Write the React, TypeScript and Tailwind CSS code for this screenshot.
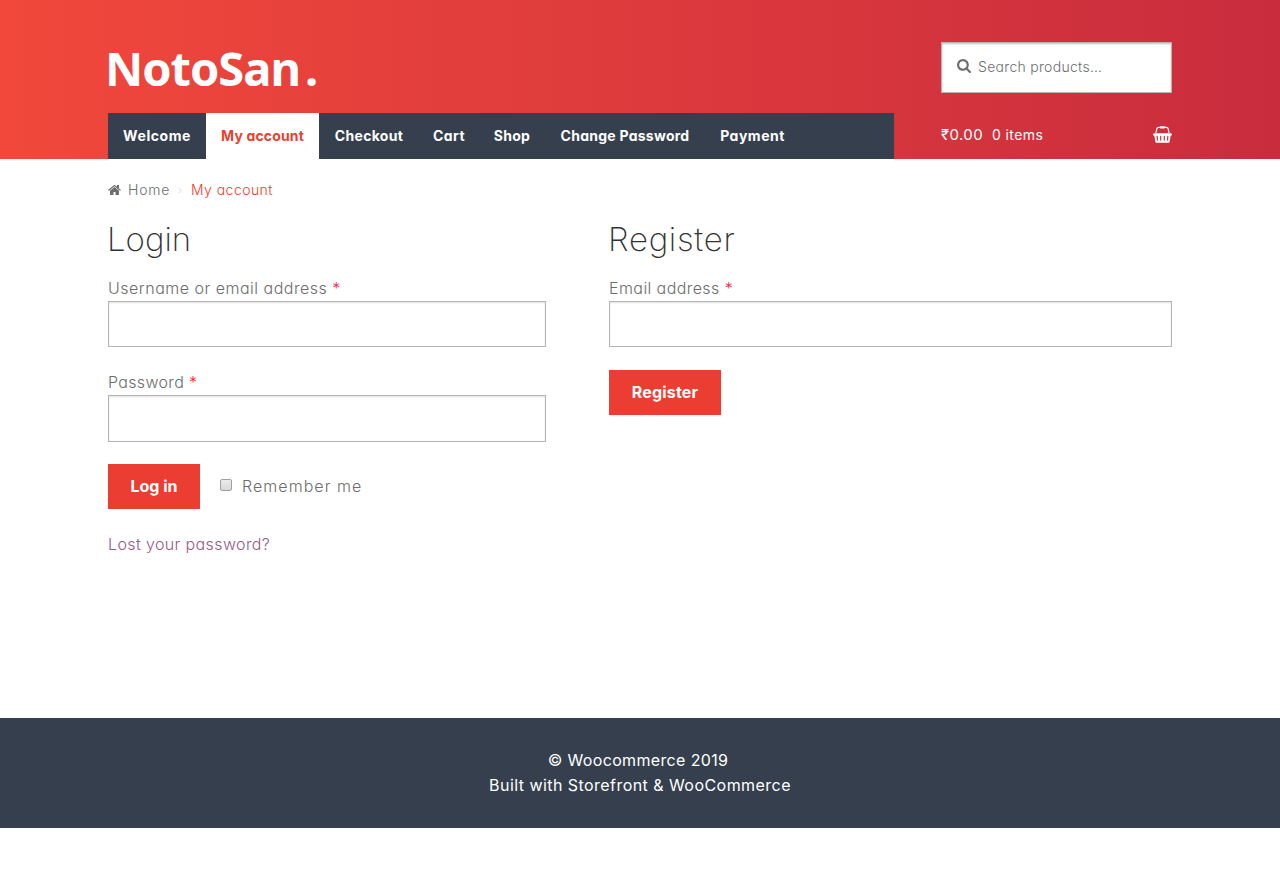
import type { ReactNode } from "react";

const SEARCH =
  "M1152 704q0 -185 -131.5 -316.5t-316.5 -131.5t-316.5 131.5t-131.5 316.5t131.5 316.5t316.5 131.5t316.5 -131.5t131.5 -316.5zM1664 -128q0 -52 -38 -90t-90 -38q-54 0 -90 38l-343 342q-179 -124 -399 -124q-143 0 -273.5 55.5t-225 150t-150 225t-55.5 273.5t55.5 273.5t150 225t225 150t273.5 55.5t273.5 -55.5t225 -150t150 -225t55.5 -273.5q0 -220 -124 -399l343 -343q37 -37 37 -90z";
const HOME =
  "M1408 544v-480q0 -26 -19 -45t-45 -19h-384v384h-256v-384h-384q-26 0 -45 19t-19 45v480q0 1 0.5 3t0.5 3l575 474l575 -474q1 -2 1 -6zM1631 613l-62 -74q-8 -9 -21 -11h-3q-13 0 -21 7l-692 577l-692 -577q-12 -8 -24 -7q-13 2 -21 11l-62 74q-8 10 -7 23.5t11 21.5l719 599q32 26 76 26t76 -26l244 -204v195q0 14 9 23t23 9h192q14 0 23 -9t9 -23v-408l219 -182q10 -8 11 -21.5t-7 -23.5z";
const BASKET =
  "M1920 768q53 0 90.5 -37.5t37.5 -90.5t-37.5 -90.5t-90.5 -37.5h-15l-115 -662q-8 -46 -44 -76t-82 -30h-1280q-46 0 -82 30t-44 76l-115 662h-15q-53 0 -90.5 37.5t-37.5 90.5t37.5 90.5t90.5 37.5h1792zM485 -32q26 2 43.5 22.5t15.5 46.5l-32 416q-2 26 -22.5 43.5t-46.5 15.5t-43.5 -22.5t-15.5 -46.5l32 -416q2 -25 20.5 -42t43.5 -17h5zM896 32v416q0 26 -19 45t-45 19t-45 -19t-19 -45v-416q0 -26 19 -45t45 -19t45 19t19 45zM1280 32v416q0 26 -19 45t-45 19t-45 -19t-19 -45v-416q0 -26 19 -45t45 -19t45 19t19 45zM1632 27l32 416q2 26 -15.5 46.5t-43.5 22.5t-46.5 -15.5t-22.5 -43.5l-32 -416q-2 -26 15.5 -46.5t43.5 -22.5h5q25 0 43.5 17t20.5 42zM476 1244l-93 -412h-132l101 441q19 88 89 143.5t160 55.5h167q0 26 19 45t45 19h384q26 0 45 -19t19 -45h167q90 0 160 -55.5t89 -143.5l101 -441h-132l-93 412q-11 44 -45.5 72t-79.5 28h-167q0 -26 -19 -45t-45 -19h-384q-26 0 -45 19t-19 45h-167q-45 0 -79.5 -28t-45.5 -72z";

// Glyph outlines use a baseline-up axis, so they are flipped into a 1792-unit tall box.
function Icon({ d, units, className }: { d: string; units: number; className: string }) {
  return (
    <svg viewBox={`0 0 ${units} 1792`} className={className} fill="currentColor" aria-hidden="true">
      <path d={d} fillRule="evenodd" transform="translate(0 1536) scale(1 -1)" />
    </svg>
  );
}

const NAV = [
  { label: "Welcome", box: "w-[98px] tracking-[0.55px]" },
  { label: "My account", box: "w-[113px] bg-white text-[#e9412f] tracking-[0.15px]" },
  { label: "Checkout", box: "w-[100px] tracking-[0.3px]" },
  { label: "Cart", box: "w-[60px] tracking-[0.4px]" },
  { label: "Shop", box: "w-[66px] tracking-[0.3px]" },
  { label: "Change Password", box: "w-[160px] tracking-[0.25px]" },
  { label: "Payment", box: "w-[95px] tracking-[0.5px]" },
];

type FieldProps = { label: ReactNode; tone: string; star: string; type: string; height: string };

function Field({ label, tone, star, type, height }: FieldProps) {
  return (
    <label className="block">
      <span className={`block h-[26px] whitespace-nowrap text-[16px] leading-[26px] ${tone}`}>
        {label} <span className={star}>*</span>
      </span>
      <input
        type={type}
        className={`block w-full border border-[#b5b5b5] bg-white shadow-[inset_0_1px_2px_rgba(0,0,0,0.125)] outline-none ${height}`}
      />
    </label>
  );
}

export default function App() {
  return (
    <div className="min-h-[869px] bg-white font-['Inter','Noto_Sans',sans-serif] [font-weight:350] text-[#6d6d6d] [font-feature-settings:'cv11']">
      <header className="h-[159px] bg-linear-to-r from-[#f1483b] to-[#c92c3d]">
        <div className="mx-auto flex w-[1064px] justify-between">
          <div className="w-[786px]">
            <h1 className="-ml-[3px] h-[113px] pt-[35px] font-['Noto_Sans',sans-serif] text-[47px] leading-[66px] font-bold tracking-[-1px] whitespace-nowrap text-white">
              NotoSan<span className="ml-[5px]">.</span>
            </h1>
            <nav className="flex h-[46px] bg-[#363f4d] text-[14px] leading-[46px] font-bold text-white">
              {NAV.map((n) => (
                <a key={n.label} href="#" className={`block text-center whitespace-nowrap ${n.box}`}>
                  {n.label}
                </a>
              ))}
            </nav>
          </div>
          <div className="w-[231px] pt-[42px]">
            <div className="flex h-[51px] items-center border border-[#b5b5b5] bg-white pl-[15px] shadow-[inset_0_1px_2px_rgba(0,0,0,0.25)]">
              <Icon d={SEARCH} units={1664} className="-mt-[4px] h-[15px] w-[14px]" />
              <span className="-mt-[2px] ml-[7px] text-[14px] tracking-[0.3px] whitespace-nowrap">Search products…</span>
            </div>
            <div className="mt-[20px] flex h-[43px] items-center text-[14px] font-normal text-white">
              <span className="mt-px w-[51px] text-[15px] tracking-[0.4px]">₹0.00</span>
              <span className="tracking-[0.4px]">0 items</span>
              <Icon d={BASKET} units={2048} className="ml-auto h-[17px] w-[19px]" />
            </div>
          </div>
        </div>
      </header>

      <main className="mx-auto h-[559px] w-[1064px]">
        <div className="flex h-[62px] items-center text-[14px] whitespace-nowrap">
          <Icon d={HOME} units={1664} className="h-[14px] w-[13px]" />
          <span className="-mt-[2px] ml-[7px] w-[50px] tracking-[0.8px]">Home</span>
          <svg viewBox="0 0 5 8" className="h-[7px] w-[4px]" fill="none" stroke="#f5bfba">
            <path d="M1 .7 4 4 1 7.3" />
          </svg>
          <span className="-mt-[2px] ml-[9px] tracking-[0.45px] text-[#e9412f]">My account</span>
        </div>
        <div className="flex justify-between">
          <section className="w-[438px]">
            <h2 className="-ml-px mb-[18px] h-[36px] text-[33px] leading-[36px] font-extralight text-[#333]">Login</h2>
            <Field
              label="Username or email address"
              tone="tracking-[0.5px]"
              star="text-[#ff1744]"
              type="text"
              height="h-[46px]"
            />
            <div className="h-[22px]" />
            <Field label="Password" tone="tracking-[0.33px]" star="text-[#ff1a0a]" type="password" height="h-[47px]" />
            <div className="mt-[22px] flex h-[45px] items-center">
              <button className="h-[45px] w-[92px] bg-[#eb3d32] pb-[2px] text-[16px] font-bold text-white">Log in</button>
              <span className="mt-[-3px] ml-[20px] h-[12px] w-[12px] rounded-[2px] border border-[#a0a0a0] bg-linear-to-b from-[#ececec] to-[#d8d8d8]" />
              <span className="-mt-[2px] ml-[10px] text-[16px] tracking-[1.05px] whitespace-nowrap">Remember me</span>
            </div>
            <p className="mt-[22px] text-[16px] leading-[26px] tracking-[0.38px] text-[#96588a]">Lost your password?</p>
          </section>
          <section className="w-[563px]">
            <h2 className="-ml-px mb-[18px] h-[36px] text-[33px] leading-[36px] font-extralight tracking-[0.7px] text-[#333]">
              Register
            </h2>
            <Field
              label="Email address"
              tone="tracking-[0.42px]"
              star="text-[#ff1744]"
              type="email"
              height="h-[46px]"
            />
            <button className="mt-[23px] h-[45px] w-[112px] bg-[#eb3d32] pb-[2px] text-[16px] font-bold tracking-[0.2px] text-white">
              Register
            </button>
          </section>
        </div>
      </main>

      <footer className="h-[110px] bg-[#363f4d] pt-[30px] text-center text-[16px] leading-[25px] font-normal text-white">
        <p className="pr-[4px] tracking-[0.35px]">© Woocommerce 2019</p>
        <p className="tracking-[0.45px]">Built with Storefront &amp; WooCommerce</p>
      </footer>
    </div>
  );
}
